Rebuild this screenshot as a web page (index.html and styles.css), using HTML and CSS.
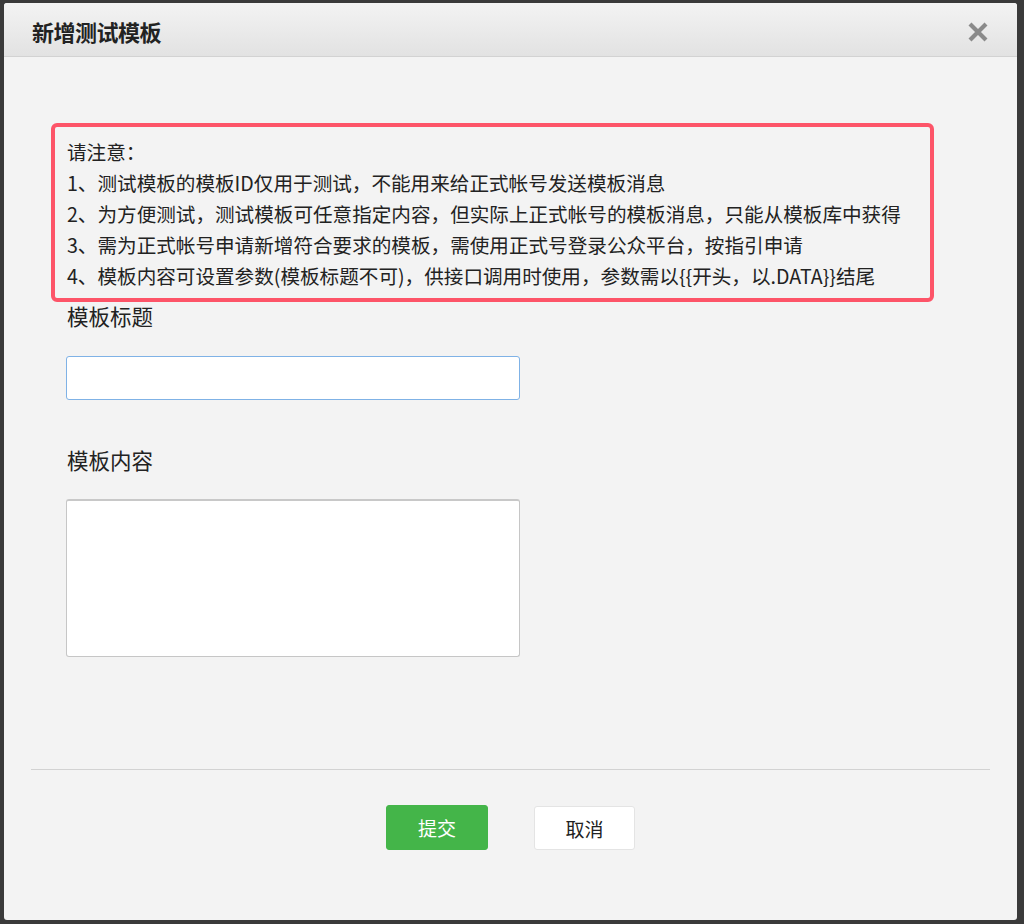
FILE: index.html
```html
<!DOCTYPE html>
<html lang="zh-CN">
<head>
<meta charset="utf-8">
<title>新增测试模板</title>
<link rel="stylesheet" href="styles.css">
</head>
<body>
<div class="dialog">
  <div class="dialog-header">
    <h1 class="dialog-title">新增测试模板</h1>
    <span class="close-btn" aria-label="关闭">
      <svg width="22" height="22" viewBox="0 0 22 22"><path d="M3 3 L19 19 M19 3 L3 19" stroke="#8a8a8a" stroke-width="4.2" stroke-linecap="butt"/></svg>
    </span>
  </div>
  <div class="dialog-body">
    <div class="notice">
      <p>请注意：</p>
      <p>1、测试模板的模板ID仅用于测试，不能用来给正式帐号发送模板消息</p>
      <p>2、为方便测试，测试模板可任意指定内容，但实际上正式帐号的模板消息，只能从模板库中获得</p>
      <p>3、需为正式帐号申请新增符合要求的模板，需使用正式号登录公众平台，按指引申请</p>
      <p>4、模板内容可设置参数(模板标题不可)，供接口调用时使用，参数需以{{开头，以.DATA}}结尾</p>
    </div>
    <div class="form">
      <label class="field-label">模板标题</label>
      <input class="field-input" type="text">
      <label class="field-label second">模板内容</label>
      <textarea class="field-textarea"></textarea>
    </div>
  </div>
  <div class="dialog-footer">
    <button class="btn btn-primary">提交</button>
    <button class="btn btn-default">取消</button>
  </div>
</div>
</body>
</html>
```
FILE: styles.css
```css
html, body {
  margin: 0;
  padding: 0;
}
body {
  background: #3a3a3a;
  width: 1024px;
  height: 924px;
  overflow: hidden;
  font-family: "Noto Sans CJK SC", "Noto Sans", sans-serif;
  color: #222;
}
.dialog {
  margin: 3px 0 0 4px;
  width: 1013px;
  height: 917px;
  background: #f3f3f3;
  border-radius: 3px;
  display: flex;
  flex-direction: column;
  overflow: hidden;
}
.dialog-header {
  height: 53px;
  flex: none;
  background: linear-gradient(#f3f3f3, #e2e2e2);
  border-bottom: 1px solid #d2d2d2;
  display: flex;
  align-items: center;
  justify-content: space-between;
  padding: 0 28px 0 28px;
}
.dialog-title {
  margin: 0;
  font-size: 22px;
  font-weight: bold;
  color: #222;
  letter-spacing: -0.5px;
  line-height: 1;
  position: relative;
  top: 1px;
}
.close-btn {
  display: flex;
  width: 22px;
  height: 22px;
  position: relative;
  top: 2px;
}
.dialog-body {
  padding: 66px 0 0 47px;
  flex: none;
}
.notice {
  border: 4px solid #fd5468;
  border-radius: 6px;
  padding: 9px 0 7px 12px;
  box-sizing: border-box;
  width: 883px;
  height: 179px;
}
.notice p {
  margin: 0;
  font-size: 19.6px;
  line-height: 31px;
  color: #222;
  white-space: nowrap;
}
.form {
  padding-left: 16px;
  display: flex;
  flex-direction: column;
  align-items: flex-start;
}
.field-label {
  font-size: 21.5px;
  line-height: 32px;
  height: 32px;
  color: #222;
  position: relative;
  top: -2px;
}
.field-label.second {
  margin-top: 46px;
}
.field-input {
  margin: 22px 0 0 -1px;
  width: 454px;
  height: 44px;
  box-sizing: border-box;
  border: 1px solid #7fb2e6;
  border-radius: 3px;
  background: #fff;
  outline: none;
}
.field-textarea {
  margin: 21px 0 0 -1px;
  width: 454px;
  height: 158px;
  box-sizing: border-box;
  border: 1px solid #c6c6c6;
  border-top: 2px solid #c8c8c8;
  border-radius: 3px;
  background: #fff;
  resize: none;
  outline: none;
}
.dialog-footer {
  margin: 112px 27px 0 27px;
  border-top: 1px solid #d2d2d2;
  padding-top: 35px;
  display: flex;
  justify-content: center;
  gap: 46px;
}
.btn {
  width: 102px;
  height: 45px;
  border-radius: 3px;
  font-family: "Noto Sans CJK SC", "Noto Sans", sans-serif;
  font-size: 19px;
  padding: 0;
  cursor: pointer;
}
.btn-primary {
  background: #44b549;
  border: 1px solid #44b549;
  color: #fff;
}
.btn-default {
  width: 101px;
  height: 44px;
  margin-top: 1px;
  background: #fff;
  border: 1px solid #e4e4e4;
  color: #222;
}
```
